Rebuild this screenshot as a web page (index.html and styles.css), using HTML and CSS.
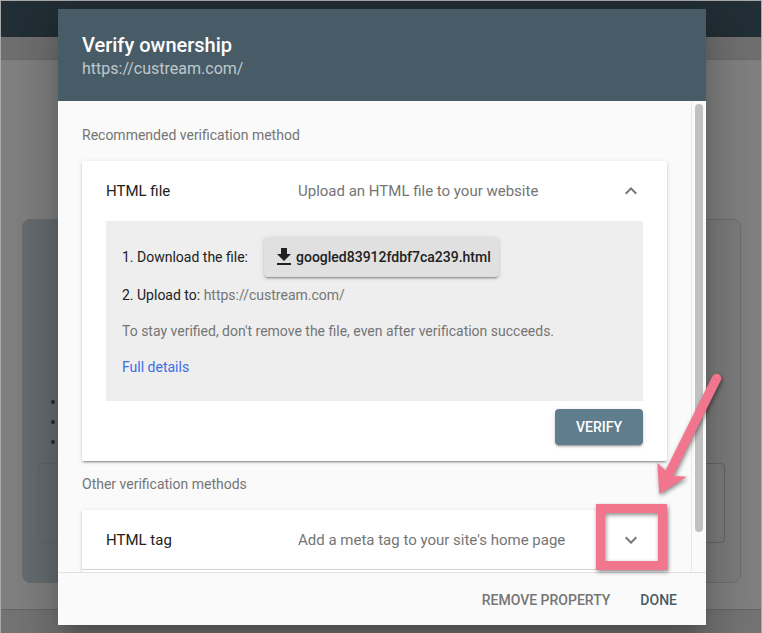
FILE: index.html
```html
<!DOCTYPE html>
<html lang="en">
<head>
  <meta charset="UTF-8">
  <meta name="viewport" content="width=device-width, initial-scale=1.0">
  <title>Verify ownership</title>
  <link rel="stylesheet" href="styles.css">
</head>
<body>
  <div class="page">
    <div class="top-bar"></div>
    <div class="sub-bar"></div>
    <div class="main">
      <div class="bg-card">
        <div class="bg-dots">
          <span class="bg-dot"></span>
          <span class="bg-dot"></span>
          <span class="bg-dot"></span>
        </div>
        <div class="bg-box"></div>
      </div>
    </div>
    <div class="bottom-bar"></div>
  </div>

  <div class="dialog">
    <div class="dialog-header">
      <div class="dialog-title">Verify ownership</div>
      <div class="dialog-subtitle">https://custream.com/</div>
    </div>

    <div class="dialog-body">
      <div class="dialog-content">
        <div class="section-label first">Recommended verification method</div>
        <div class="method-card">
          <div class="method-head">
            <div class="method-name">HTML file</div>
            <div class="method-desc">Upload an HTML file to your website</div>
            <svg class="chevron" viewBox="0 0 24 24"><path d="M12 8l-6 6 1.41 1.41L12 10.83l4.59 4.58L18 14z"/></svg>
          </div>
          <div class="method-panel">
            <div class="step-download">
              <span>1. Download the file:</span>
              <button type="button" class="download-button">
                <svg class="download-icon" viewBox="0 0 24 24"><path d="M19 9h-4V3H9v6H5l7 7 7-7zM5 18v2h14v-2H5z"/></svg>
                googled83912fdbf7ca239.html
              </button>
            </div>
            <div class="step-upload">2. Upload to: <span class="muted">https://custream.com/</span></div>
            <div class="step-note muted">To stay verified, don't remove the file, even after verification succeeds.</div>
            <a class="step-link" href="#">Full details</a>
          </div>
          <div class="method-actions">
            <button type="button" class="verify-button">VERIFY</button>
          </div>
        </div>

        <div class="section-label">Other verification methods</div>
        <div class="method-card closed">
          <div class="method-head">
            <div class="method-name">HTML tag</div>
            <div class="method-desc">Add a meta tag to your site's home page</div>
            <svg class="chevron" viewBox="0 0 24 24"><path d="M16.59 8.59L12 13.17 7.41 8.59 6 10l6 6 6-6z"/></svg>
          </div>
        </div>
        <div class="method-card closed"></div>
      </div>
      <div class="scroll-track">
        <div class="scroll-thumb"></div>
      </div>
    </div>

    <div class="dialog-footer">
      <button type="button" class="text-button">REMOVE PROPERTY</button>
      <button type="button" class="text-button primary">DONE</button>
    </div>
  </div>

  <svg class="annotation" viewBox="0 0 762 633">
    <rect x="600.5" y="508.5" width="62" height="57" fill="none" stroke="#f1758c" stroke-width="9"/>
    <line x1="716.5" y1="378.5" x2="670" y2="472" stroke="#f1758c" stroke-width="9.5" stroke-linecap="round"/>
    <path d="M659.3 494L657.3 462.7L665 470L674 476L686.7 476.7Z" fill="#f1758c"/>
  </svg>
</body>
</html>
```

FILE: styles.css
```css
* {
  box-sizing: border-box;
}
body {
  margin: 0;
  width: 762px;
  height: 633px;
  overflow: hidden;
  font-family: Roboto, Arial, sans-serif;
  font-size: 14px;
  color: #212121;
  background-color: #a9a9a9;
}
button {
  font-family: inherit;
  border: none;
  cursor: pointer;
}

/* dimmed page behind the dialog */
.page {
  display: flex;
  flex-direction: column;
  height: 632px;
  margin: 1px 1px 0 1px;
}
.top-bar {
  height: 36px;
  background-color: #222e35;
}
.sub-bar {
  height: 23px;
  background-color: #6f6f6f;
  border-bottom: 1px solid #696969;
}
.main {
  flex: 1;
  padding: 159px 0 0 21px;
  background-color: #7f7f7f;
  border-bottom: 1px solid #656565;
}
.bottom-bar {
  height: 23px;
  background-color: #737373;
}
.bg-card {
  width: 719px;
  height: 364px;
  padding: 180px 15px 0 15px;
  background: linear-gradient(90deg, #656c6f 50%, #7b7b7b 50%);
  border: 1px solid #6c6c6c;
  border-radius: 8px;
}
.bg-dots {
  display: flex;
  flex-direction: column;
  gap: 16px;
  margin-left: 13px;
}
.bg-dot {
  width: 4px;
  height: 4px;
  border-radius: 50%;
  background-color: #222e35;
}
.bg-box {
  height: 80px;
  margin-top: 19px;
  border: 1px solid #5f6669;
  border-radius: 4px;
}

/* dialog */
.dialog {
  position: absolute;
  top: 9px;
  left: 58px;
  display: flex;
  flex-direction: column;
  width: 648px;
  height: 616px;
  background-color: #fafafa;
  box-shadow: 0 11px 15px -7px rgba(0, 0, 0, 0.2), 0 24px 38px 3px rgba(0, 0, 0, 0.14), 0 9px 46px 8px rgba(0, 0, 0, 0.12);
}
.dialog-header {
  height: 92px;
  padding: 24px 24px 0 24px;
  background-color: #485c67;
}
.dialog-title {
  font-size: 20px;
  font-weight: 500;
  line-height: 24px;
  color: #fff;
}
.dialog-subtitle {
  font-size: 16px;
  line-height: 24px;
  color: #bfc8cc;
}
.dialog-body {
  display: flex;
  flex: 1;
  min-height: 0;
}
.dialog-content {
  flex: 1;
  padding: 0 24px;
  overflow: hidden;
}
.scroll-track {
  width: 15px;
  padding: 3px 3px 0 3px;
  border-left: 1px solid #e8e8e8;
}
.scroll-thumb {
  height: 428px;
  background-color: #c1c1c1;
  border-radius: 4px;
}
.section-label {
  padding: 13px 0 16px 0;
  font-size: 14px;
  line-height: 20px;
  color: #757575;
}
.section-label.first {
  padding-top: 24px;
}
.method-card {
  background-color: #fff;
  border-radius: 2px;
  box-shadow: 0 2px 2px rgba(0, 0, 0, 0.14), 0 1px 5px rgba(0, 0, 0, 0.12), 0 3px 1px -2px rgba(0, 0, 0, 0.2);
}
.method-card.closed {
  height: 60px;
  border-bottom: 1px solid #ddd;
  border-radius: 0;
}
.method-head {
  display: grid;
  grid-template-columns: 192px 1fr 24px;
  align-items: center;
  height: 60px;
  padding: 0 24px;
}
.method-name {
  font-size: 15px;
}
.method-desc {
  font-size: 15px;
  color: #757575;
}
.chevron {
  width: 24px;
  height: 24px;
  fill: #757575;
}
.method-panel {
  height: 180px;
  margin: 0 24px;
  padding: 16px;
  line-height: 20px;
  background-color: #eee;
}
.step-download {
  display: flex;
  align-items: center;
  gap: 16px;
}
.download-button {
  display: flex;
  align-items: center;
  height: 40px;
  padding: 0 8px;
  font-size: 14px;
  font-weight: 500;
  color: #212121;
  background-color: #e0e0e0;
  border-radius: 4px;
  box-shadow: 0 2px 2px rgba(0, 0, 0, 0.14), 0 1px 5px rgba(0, 0, 0, 0.12), 0 3px 1px -2px rgba(0, 0, 0, 0.2);
}
.download-icon {
  width: 24px;
  height: 24px;
  fill: #212121;
}
.step-upload {
  margin-top: 8px;
}
.step-note {
  margin-top: 16px;
}
.muted {
  color: #757575;
}
.step-link {
  display: block;
  margin-top: 16px;
  color: #3b6ee8;
  text-decoration: none;
}
.method-actions {
  display: flex;
  justify-content: flex-end;
  padding: 8px 24px 16px 24px;
}
.verify-button {
  width: 88px;
  height: 36px;
  font-size: 14px;
  font-weight: 500;
  color: #fff;
  background-color: #5f7d8c;
  border-radius: 4px;
  box-shadow: 0 2px 2px rgba(0, 0, 0, 0.14), 0 1px 5px rgba(0, 0, 0, 0.12), 0 3px 1px -2px rgba(0, 0, 0, 0.2);
}
.dialog-footer {
  position: relative;
  display: flex;
  justify-content: flex-end;
  align-items: center;
  gap: 30px;
  height: 53px;
  padding: 1px 29px 0 0;
  background-color: #fafafa;
  border-top: 1px solid #e0e0e0;
}
.text-button {
  padding: 0;
  font-size: 14px;
  font-weight: 500;
  color: #757575;
  background: none;
}
.text-button.primary {
  color: #485c67;
}

/* pink arrow and box drawn over the screenshot */
.annotation {
  position: absolute;
  top: 0;
  left: 0;
  width: 762px;
  height: 633px;
  filter: drop-shadow(1px 2px 2px rgba(0, 0, 0, 0.45));
}
```
